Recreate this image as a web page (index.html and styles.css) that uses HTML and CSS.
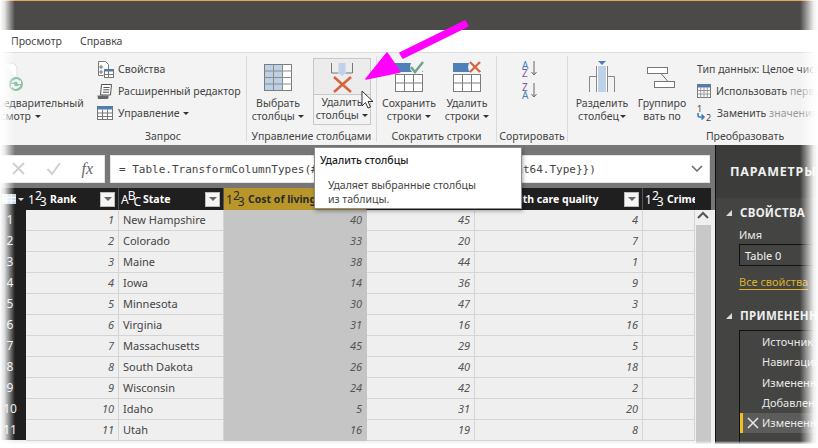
FILE: index.html
```html
<!DOCTYPE html>
<html lang="ru">
<head>
<meta charset="utf-8">
<title>Power Query</title>
<link rel="stylesheet" href="styles.css">
</head>
<body>
<div class="page">
  <header class="titlebar"></header>
  <nav class="menu"><span>Просмотр</span><span>Справка</span></nav>
  <section class="ribbon">
    <div class="group g-query">
      <div class="group-body">
        <div class="big preview">
          <svg class="icon" width="40" height="32" viewBox="0 0 40 32"><path d="M14 2h8l4 4v12" fill="#fff" stroke="#ddd"/><circle cx="25" cy="23" r="7" fill="#8fc0a8"/><path d="M20.500 22a4.800 4.800 0 0 1 8.500-2l1-1v4h-4l1-1a3 3 0 0 0-5 0zM29.500 24a4.800 4.800 0 0 1-8.500 2l-1 1v-4h4l-1 1a3 3 0 0 0 5 0z" fill="#eef5f1"/></svg>
          <span class="lbl">Обновить предварительный</span><span class="lbl">просмотр <i class="caret"></i></span>
        </div>
        <div class="small-list">
          <div class="small"><svg width="17" height="17" viewBox="0 0 17 17"><path d="M1.500 .5h7l3 3v5M1.500 .5v14h5" fill="#fff" stroke="#777"/><path d="M3 5h2v2H3zM3 10h2v2H3z" fill="none" stroke="#777"/><rect x="7.500" y="8.500" width="9" height="8" fill="#fff" stroke="#777"/><path d="M7.500 8.500h9v2h-9z" fill="#4a7fb5"/><path d="M7.500 13.500h9M11.500 10v6.500" stroke="#777"/></svg><span>Свойства</span></div>
          <div class="small"><svg width="17" height="17" viewBox="0 0 17 17"><path d="M4.500 1.500h10l-1 10.500h-10z" fill="#fff" stroke="#555"/><path d="M6.500 4.500h6M6.300 6.800h6M6 9.200h6" stroke="#555"/><path d="M.5 12.500h11v2a1.500 1.500 0 0 1-1.500 1.500H1z" fill="#666"/></svg><span>Расширенный редактор</span></div>
          <div class="small"><svg width="17" height="15" viewBox="0 0 17 15"><rect x=".5" y=".5" width="15" height="13" fill="#fff" stroke="#777"/><path d="M.5 .5h15v3H.5z" fill="#4a7fb5"/><path d="M.5 7h15M.5 10.500h15M5.500 3.500v10M10.500 3.500v10" stroke="#777"/></svg><span>Управление <i class="caret"></i></span></div>
        </div>
      </div>
      <div class="group-label">Запрос</div>
    </div>

    <div class="group g-cols">
      <div class="group-body">
        <div class="big w-select">
          <svg class="icon" width="30" height="32" viewBox="0 0 30 32"><rect x="1.500" y="3.500" width="27" height="26" fill="#fff" stroke="#7d7d7d"/><rect x="2" y="4" width="18" height="25" fill="#bcd0e6"/><path d="M1.500 10h27M1.500 16.500h27M1.500 23h27M10.500 3.500v26M19.500 3.500v26" stroke="#8b8b8b"/></svg>
          <span class="lbl">Выбрать</span><span class="lbl">столбцы <i class="caret"></i></span>
        </div>
        <div class="big delete">
          <div class="delete-top">
            <svg width="22" height="31" viewBox="0 0 22 31"><path d="M.5 1v10h7M21.500 1v10h-7" fill="none" stroke="#777"/><path d="M7.500 1h7v10l-3.500 3-3.500-3z" fill="#bdd2e8"/><path d="M3 30 20 15M3 15l17 15" stroke="#d8643f" stroke-width="2.600"/></svg>
          </div>
          <span class="lbl">Удалить</span><span class="lbl">столбцы <i class="caret"></i></span>
        </div>
      </div>
      <div class="group-label">Управление столбцами</div>
    </div>

    <div class="group g-rows">
      <div class="group-body">
        <div class="big w-keep">
          <svg class="icon" width="30" height="32" viewBox="0 0 30 32"><rect x="1.500" y="13.500" width="27" height="17" fill="#fff" stroke="#7d7d7d"/><path d="M1.500 22h27M10.500 13.500v17M19.500 13.500v17" stroke="#7d7d7d"/><rect x="1" y="2" width="28" height="9" fill="#4f81b8"/><circle cx="23" cy="6" r="7" fill="#f3f3f3"/><path d="M17 6l4 5 8-10" fill="none" stroke="#6fa58c" stroke-width="2.500"/></svg>
          <span class="lbl">Сохранить</span><span class="lbl">строки <i class="caret"></i></span>
        </div>
        <div class="big w-drop">
          <svg class="icon" width="30" height="32" viewBox="0 0 30 32"><rect x="1.500" y="13.500" width="27" height="17" fill="#fff" stroke="#7d7d7d"/><path d="M1.500 22h27M10.500 13.500v17M19.500 13.500v17" stroke="#7d7d7d"/><rect x="1" y="2" width="28" height="9" fill="#4f81b8"/><circle cx="23" cy="6" r="7" fill="#f3f3f3"/><path d="M18 1l10 10M28 1 18 11" stroke="#d8643f" stroke-width="2.200"/></svg>
          <span class="lbl">Удалить</span><span class="lbl">строки <i class="caret"></i></span>
        </div>
      </div>
      <div class="group-label">Сократить строки</div>
    </div>

    <div class="group g-sort">
      <div class="group-body">
        <div class="sort">
          <div class="sort-row"><span class="az"><b>A</b><b class="z">Z</b></span><svg width="6" height="15" viewBox="0 0 6 15"><path d="M3 0v14M.5 11 3 14l2.500-3" fill="none" stroke="#666"/></svg></div>
          <div class="sort-row"><span class="az"><b class="z">Z</b><b>A</b></span><svg width="6" height="15" viewBox="0 0 6 15"><path d="M3 0v14M.5 11 3 14l2.500-3" fill="none" stroke="#666"/></svg></div>
        </div>
      </div>
      <div class="group-label">Сортировать</div>
    </div>

    <div class="group g-trans">
      <div class="group-body">
        <div class="big w-split">
          <svg class="icon" width="30" height="32" viewBox="0 0 30 32"><path d="M2.500 31V15.500h7M27.500 31V15.500h-7" fill="none" stroke="#888"/><rect x="9" y="5" width="12" height="26" fill="#fff"/><rect x="11" y="5" width="8" height="26" fill="#bdd2e8"/><path d="M9.500 5v26M20.500 5v26" stroke="#888"/><path d="M11 0h8l-4 4z" fill="#4a7fb5"/></svg>
          <span class="lbl">Разделить</span><span class="lbl">столбец<i class="caret tight"></i></span>
        </div>
        <div class="big w-group">
          <svg class="icon" width="30" height="32" viewBox="0 0 30 32"><rect x=".5" y="6.500" width="20" height="6" fill="#fff" stroke="#777"/><rect x="7.500" y="20.500" width="20" height="6" fill="#fff" stroke="#777"/><path d="M14 12.500l7 8" stroke="#777"/></svg>
          <span class="lbl">Группиро</span><span class="lbl">вать по</span>
        </div>
        <div class="small-list trans-list">
          <div class="small"><span>Тип данных: Целое число</span></div>
          <div class="small"><svg width="15" height="14" viewBox="0 0 15 14"><rect x=".5" y=".5" width="13" height="13" fill="#fff" stroke="#777"/><path d="M.5 .5h13v3H.5z" fill="#4a7fb5"/><path d="M.5 6.500h13M.5 10h13M3.700 3v11M7 3v11M10.300 3v11" stroke="#999"/></svg><span>Использовать <em>первую строку в качестве заголовков</em></span></div>
          <div class="small"><span class="swap"><span>1</span><svg width="9" height="7" viewBox="0 0 9 7"><path d="M1 0v2.500a1.500 1.500 0 0 0 1.500 1.500H6M4.500 1.500 7 4 4.500 6.500" fill="none" stroke="#3e7dbd" stroke-width="1.600"/></svg><span>2</span></span><span>Заменить <em>значения</em></span></div>
        </div>
      </div>
      <div class="group-label">Преобразовать</div>
    </div>
  </section>

  <div class="work">
    <main class="editor">
      <div class="formula">
        <div class="fx-box">
          <svg width="16" height="14" viewBox="0 0 16 14"><path d="M2 1l11 11M13 1 2 12" stroke="#cfcfcf" stroke-width="2"/></svg>
          <svg width="16" height="14" viewBox="0 0 16 14"><path d="M1.500 7l4.500 5 8-11" fill="none" stroke="#cfcfcf" stroke-width="2"/></svg>
          <span class="fx">fx</span>
        </div>
        <div class="fx-input"><span>= Table.TransformColumnTypes(#"Renamed Columns",{{"Crime", Int64.Type}})</span><svg width="12" height="8" viewBox="0 0 12 8"><path d="M1 1l5 5 5-5" fill="none" stroke="#666" stroke-width="1.500"/></svg></div>
      </div>
      <div class="grid-wrap">
        <div class="grid" id="grid">
          <div class="hd corner"><svg width="14" height="10" viewBox="0 0 14 10"><rect width="14" height="10" fill="#c9d6e6"/><path d="M0 3.500h14M0 6.800h14M4.700 0v10M9.300 0v10" stroke="#fff"/></svg><i class="caret white"></i></div>
          <div class="hd"><span class="typ"><span>1</span><sup>2</sup><sub>3</sub></span><span class="ttl">Rank</span><span class="drop"><i class="caret gray"></i></span></div>
          <div class="hd"><span class="typ abc"><span>A</span><sup>B</sup><sub>C</sub></span><span class="ttl">State</span><span class="drop"><i class="caret gray"></i></span></div>
          <div class="hd gold"><span class="typ"><span>1</span><sup>2</sup><sub>3</sub></span><span class="ttl">Cost of living</span></div>
          <div class="hd"><span class="typ"><span>1</span><sup>2</sup><sub>3</sub></span><span class="ttl">Weather</span></div>
          <div class="hd"><span class="typ"><span>1</span><sup>2</sup><sub>3</sub></span><span class="ttl">Health care quality</span><span class="drop"><i class="caret gray"></i></span></div>
          <div class="hd last"><span class="typ"><span>1</span><sup>2</sup><sub>3</sub></span><span class="ttl">Crime</span></div>

          <div class="rn">1</div><div class="n">1</div><div class="s">New Hampshire</div><div class="n sel">40</div><div class="n">45</div><div class="n">4</div><div class="c"></div>
          <div class="rn">2</div><div class="n">2</div><div class="s">Colorado</div><div class="n sel">33</div><div class="n">20</div><div class="n">7</div><div class="c"></div>
          <div class="rn">3</div><div class="n">3</div><div class="s">Maine</div><div class="n sel">38</div><div class="n">44</div><div class="n">1</div><div class="c"></div>
          <div class="rn">4</div><div class="n">4</div><div class="s">Iowa</div><div class="n sel">14</div><div class="n">36</div><div class="n">9</div><div class="c"></div>
          <div class="rn">5</div><div class="n">5</div><div class="s">Minnesota</div><div class="n sel">30</div><div class="n">47</div><div class="n">3</div><div class="c"></div>
          <div class="rn">6</div><div class="n">6</div><div class="s">Virginia</div><div class="n sel">31</div><div class="n">16</div><div class="n">16</div><div class="c"></div>
          <div class="rn">7</div><div class="n">7</div><div class="s">Massachusetts</div><div class="n sel">45</div><div class="n">29</div><div class="n">5</div><div class="c"></div>
          <div class="rn">8</div><div class="n">8</div><div class="s">South Dakota</div><div class="n sel">26</div><div class="n">40</div><div class="n">18</div><div class="c"></div>
          <div class="rn">9</div><div class="n">9</div><div class="s">Wisconsin</div><div class="n sel">24</div><div class="n">42</div><div class="n">2</div><div class="c"></div>
          <div class="rn">10</div><div class="n">10</div><div class="s">Idaho</div><div class="n sel">5</div><div class="n">31</div><div class="n">20</div><div class="c"></div>
          <div class="rn">11</div><div class="n">11</div><div class="s">Utah</div><div class="n sel">16</div><div class="n">19</div><div class="n">8</div><div class="c"></div>
        </div>
        <div class="scroll">
          <div class="scroll-head"></div>
          <svg width="12" height="8" viewBox="0 0 12 8"><path d="M1 7l5-5 5 5" fill="none" stroke="#555" stroke-width="2"/></svg>
          <div class="thumb"></div>
        </div>
      </div>
    </main>
    <aside class="panel">
      <h2 class="panel-title">ПАРАМЕТРЫ ЗАПРОСА</h2>
      <div class="panel-body">
        <h3 class="sec"><i class="tri"></i>СВОЙСТВА</h3>
        <div class="fld">Имя</div>
        <div class="name-box">Table 0</div>
        <a class="all">Все свойства</a>
        <h3 class="sec sec2"><i class="tri"></i>ПРИМЕНЕННЫЕ ШАГИ</h3>
        <ul class="steps">
          <li>Источник</li>
          <li>Навигация</li>
          <li>Измененный тип</li>
          <li>Добавлен столбец</li>
          <li class="cur"><svg width="12" height="12" viewBox="0 0 12 12"><path d="M1 1l10 10M11 1 1 11" stroke="#e8e8e8" stroke-width="1.500"/></svg>Измененный тип1</li>
        </ul>
      </div>
    </aside>
  </div>

  <div class="tooltip">
    <div class="tip-title">Удалить столбцы</div>
    <p>Удаляет выбранные столбцы<br>из таблицы.</p>
  </div>

  <svg class="arrow" width="120" height="70" viewBox="0 0 120 70"><path d="M106 7 L109 12 L44 44 L41 39 Z M28 39 L41 58 L7 65 Z" fill="#ff00ff" stroke="#ff00ff" stroke-linejoin="round" stroke-width="1.500"/></svg>
  <svg class="pointer" width="13" height="19" viewBox="0 0 13 19"><path d="M1 1v15l3.500-3.500 2.500 5.500 2.500-1-2.500-5.500H12z" fill="#fff" stroke="#333"/></svg>

  <div class="fade fade-left"></div>
  <div class="fade fade-right"></div>
  <div class="fade fade-bottom"></div>
</div>
</body>
</html>
```
FILE: styles.css
```css
* { box-sizing: border-box; }
html, body { margin: 0; padding: 0; background: #fff; }
.page {
  position: relative;
  width: 818px;
  height: 448px;
  overflow: hidden;
  display: flex;
  flex-direction: column;
  font-family: "Noto Sans", "Open Sans", sans-serif;
  font-size: 10.5px;
  color: #444;
}
.titlebar { height: 30px; flex: none; background: #4b4a48; border-top: 1px solid #e8a35c; }
.menu { height: 23px; flex: none; background: #fff; display: flex; gap: 18px; padding: 3px 0 0 11px; line-height: 17px; border-bottom: 1px solid #dcdcdc; }

.ribbon { height: 92px; flex: none; display: flex; background: #f3f3f3; padding-top: 3px; }
.group { flex: none; display: flex; flex-direction: column; border-right: 1px solid #dadada; height: 86px; }
.group-body { flex: 1; display: flex; min-height: 0; }
.group-label { height: 14px; flex: none; text-align: center; line-height: 16px; white-space: nowrap; }
.g-query { width: 247px; overflow: hidden; }
.g-cols { width: 130px; }
.g-rows { width: 120px; }
.g-sort { width: 71px; }
.g-trans { flex: 1; border-right: 0; min-width: 0; overflow: hidden; }
.g-query .group-label { padding-left: 80px; }
.g-trans .group-label { padding-left: 104px; }

.big { flex: none; display: flex; flex-direction: column; align-items: center; line-height: 13px; }
.icon { margin-top: 5px; height: 32px; flex: none; margin-bottom: 4px; }
.lbl { white-space: nowrap; }
.preview { width: 140px; margin-left: -59px; margin-right: 16px; }
.w-select { width: 62px; }
.delete { width: 58px; height: 67px; margin-left: 4px; border: 1px solid #c8c8c8; margin-top: 2px; }
.delete-top { height: 36px; width: 100%; flex: none; background: #ececec; border-bottom: 1px solid #c8c8c8; display: flex; justify-content: center; padding-top: 3px; margin-bottom: 1px; }
.w-keep { width: 58px; margin-left: 3px; }
.w-drop { width: 58px; }
.w-split { width: 58px; margin-left: 5px; }
.w-group { width: 62px; }

.caret { display: inline-block; width: 0; height: 0; border-left: 3px solid transparent; border-right: 3px solid transparent; border-top: 3px solid #333; vertical-align: 2px; margin-left: 1px; }
.caret.white { border-top-color: #ddd; }
.caret.gray { border-left-width: 4px; border-right-width: 4px; border-top: 4px solid #666; margin: 0; vertical-align: 0; }

.small-list { display: flex; flex-direction: column; padding-top: 2px; min-width: 0; }
.small { height: 22px; flex: none; display: flex; align-items: center; gap: 4px; white-space: nowrap; }
.small svg { flex: none; }
.trans-list { margin-left: 4px; }
.trans-list .small { gap: 4px; }
.trans-list em { font-style: normal; color: #999; }
.swap { width: 16px; height: 18px; flex: none; font-size: 9px; line-height: 9px; display: grid; grid-template-columns: 9px 7px; grid-template-rows: 9px 9px; color: #444; }
.swap span:first-child { grid-column: 1; grid-row: 1; }
.swap svg { grid-column: 1; grid-row: 2; }
.swap span:last-child { grid-column: 2; grid-row: 2; }

.sort { display: flex; flex-direction: column; gap: 7px; padding: 5px 0 0 25px; }
.sort-row { display: flex; align-items: center; gap: 3px; height: 15px; }
.az { display: flex; flex-direction: column; font-size: 10px; line-height: 8px; }
.az b { font-weight: 400; color: #3f7fbf; }
.az b.z { color: #7b5aa6; }

.work { flex: 1; display: flex; min-height: 0; }
.editor { width: 716px; flex: none; background: #777; border-right: 1px solid #111; padding-top: 10px; display: flex; flex-direction: column; min-height: 0; }
.formula { height: 33px; flex: none; display: flex; gap: 5px; padding-right: 5px; }
.fx-box { width: 105px; height: 28px; flex: none; background: #fff; border: 1px solid #e4e4e4; display: flex; align-items: center; justify-content: space-between; padding: 0 11px 0 10px; }
.fx { font-family: "Liberation Serif", serif; font-style: italic; font-size: 16px; color: #666; }
.fx-input { flex: 1; height: 28px; background: #fff; border: 1px solid #e4e4e4; display: flex; align-items: center; justify-content: space-between; padding: 0 6px 0 8px; font-family: "DejaVu Sans Mono", "Liberation Mono", monospace; font-size: 11px; color: #444; white-space: nowrap; overflow: hidden; }

.grid-wrap { flex: 1; display: flex; min-height: 0; background: #efefef; overflow: hidden; }
.grid { width: 695px; flex: none; display: grid; grid-template-columns: 26px 93px 105px 143px 108px 168px 52px; grid-auto-rows: 21px; align-content: start; background: #efefef; overflow: hidden; font-size: 11px; }
.hd { height: 22px; background: #1f1f1f; color: #fff; display: flex; align-items: center; font-weight: 700; border-right: 1px solid #555; white-space: nowrap; overflow: hidden; padding-left: 2px; }
.hd.corner { justify-content: center; gap: 1px; padding: 0; border: 0; }
.hd.gold { background: #b8962a; color: #2b2b2b; }
.hd.last { border-right: 0; }
.typ { display: inline-flex; align-items: center; font-weight: 400; font-size: 12px; width: 18px; flex: none; margin-right: 4px; }
.typ sup { font-size: 12px; line-height: 1; margin-top: -6px; }
.typ sub { font-size: 12px; line-height: 1; margin-top: 6px; margin-left: -2px; }
.typ.abc sup { margin-left: -1px; }
.ttl { flex: 1; min-width: 0; overflow: hidden; font-size: 10.5px; }
.drop { width: 15px; height: 15px; flex: none; background: #f5f5f5; margin-right: 3px; display: flex; align-items: center; justify-content: center; border: 1px solid #bbb; }

.rn { background: #1f1f1f; color: #eee; font-size: 12px; text-align: center; padding-right: 6px; line-height: 20px; padding-top: 1px; }
.n, .s, .c { border-right: 1px solid #d4d4d4; border-bottom: 1px solid #d4d4d4; line-height: 19px; white-space: nowrap; margin-top: 1px; height: 21px; }
.n { text-align: right; font-style: italic; padding-right: 4px; color: #555; }
.s { padding-left: 4px; color: #444; }
.n.sel { background: #c5c5c5; border-color: #c5c5c5; }

.scroll { flex: 1; display: flex; flex-direction: column; align-items: center; }
.scroll-head { width: 100%; height: 22px; flex: none; background: #1f1f1f; border-right: 4px solid #777; margin-bottom: 1px; }
.scroll svg { width: 12px; flex: none; margin-right: 4px; }
.thumb { width: 15px; flex: 1; margin-top: 6px; margin-right: 4px; background: #c8c8c8; }

.panel { flex: 1; display: flex; flex-direction: column; min-width: 0; background: #3c3c3a; color: #e8e8e8; overflow: hidden; }
.panel-title { height: 53px; flex: none; margin: 0; padding: 19px 0 0 14px; font-size: 12.5px; line-height: 16px; font-weight: 700; letter-spacing: .8px; white-space: nowrap; color: #f0f0f0; }
.panel-body { flex: 1; background: #444442; padding: 7px 0 0 14px; white-space: nowrap; }
.sec { margin: 0 0 0 -5px; font-size: 11.5px; line-height: 16px; font-weight: 700; letter-spacing: .3px; display: flex; align-items: center; color: #eee; }
.tri { width: 0; height: 0; border-left: 6px solid transparent; border-bottom: 6px solid #ddd; margin: 0 8px 0 1px; flex: none; }
.fld { padding-left: 9px; margin-top: 6px; line-height: 15px; font-size: 11px; }
.name-box { margin: 2px 0 0 9px; width: 200px; height: 22px; border: 1px solid #111; line-height: 21px; padding-left: 5px; font-size: 11px; color: #f4f4f4; }
.all { display: inline-block; margin: 9px 0 0 9px; line-height: 14px; color: #d9b02b; font-size: 11px; border-bottom: 1px solid #d9b02b; }
.sec2 { margin-top: 18px; }
.steps { list-style: none; margin: 6px 0 0 9px; padding: 1px 0 0; width: 200px; height: 130px; border: 1px solid #111; font-size: 11px; }
.steps li { height: 20.250px; line-height: 20px; padding-left: 22px; color: #e8e8e8; }
.steps li.cur { background: #5c5c5c; border-left: 3px solid #f0c020; padding-left: 4px; display: flex; align-items: center; gap: 3px; }
.steps li.cur svg { flex: none; }

.tooltip { position: absolute; left: 314px; top: 147px; width: 208px; height: 62px; background: #fff; border: 1px solid #8e8e8e; box-shadow: 1px 2px 4px rgba(0,0,0,.35); padding: 5px 0 0 5px; color: #444; font-size: 10.5px; }
.tip-title { line-height: 15px; font-weight: 500; color: #222; }
.tooltip p { margin: 10px 0 0 8px; line-height: 14px; }

.arrow { position: absolute; left: 359px; top: 14px; }
.pointer { position: absolute; left: 361px; top: 90px; }

.fade { position: absolute; pointer-events: none; }
.fade-left { left: 0; top: 0; width: 15px; height: 448px; background: linear-gradient(to right, #fff 0, rgba(255,255,255,.85) 30%, rgba(255,255,255,0) 100%); }
.fade-right { right: 0; top: 0; width: 18px; height: 448px; background: linear-gradient(to left, #fff 0, rgba(255,255,255,.9) 25%, rgba(255,255,255,0) 100%); }
.fade-bottom { left: 0; bottom: 0; width: 818px; height: 7px; background: linear-gradient(to top, #fff 0, #fff 50%, rgba(255,255,255,0) 100%); }
```
